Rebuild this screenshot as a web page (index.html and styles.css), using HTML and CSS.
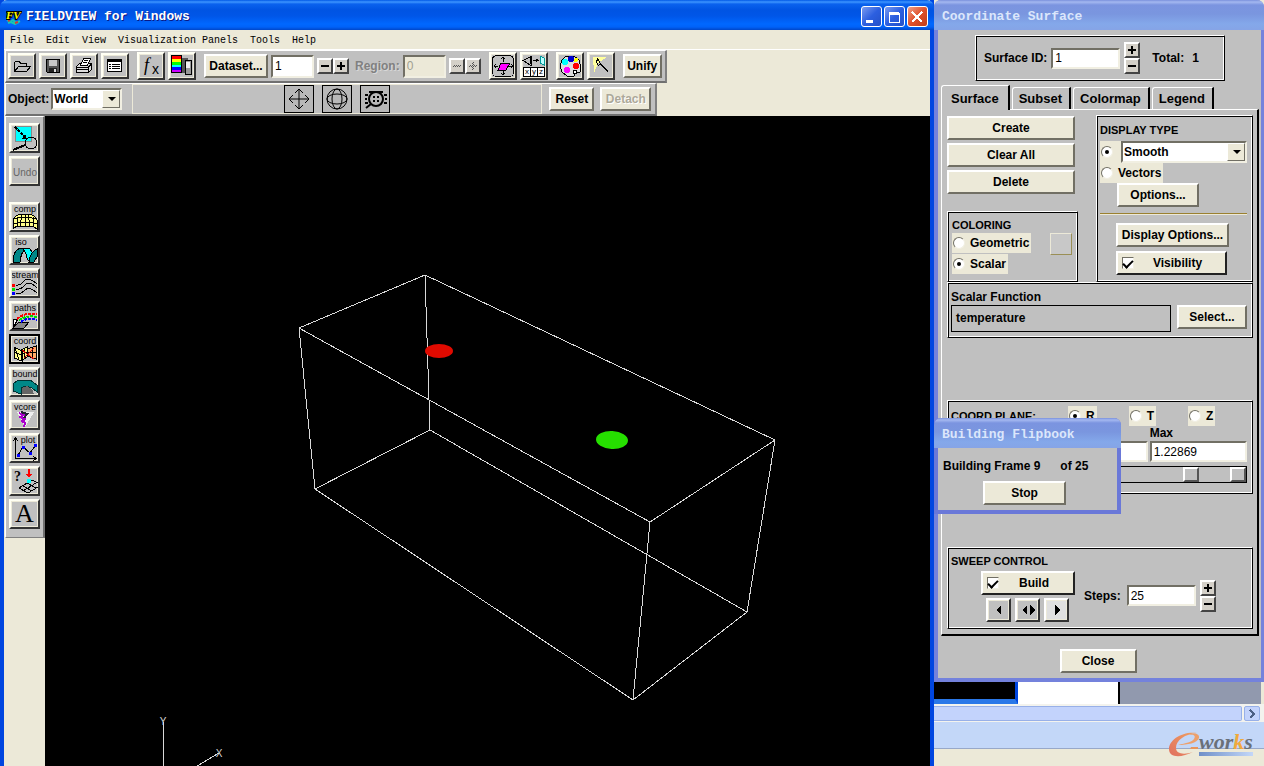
FILE: index.html
```
<!DOCTYPE html>
<html lang="en">
<head>
    <meta charset="UTF-8">
    <meta name="viewport" content="width=device-width, initial-scale=1.0">
    <title>FIELDVIEW for Windows</title>
    <link rel="stylesheet" href="styles.css">
</head>
<body>

<div class="desktop">

    <!-- Main window -->
    <main class="window">
        <header class="titlebar">
            <svg class="app-icon" width="16" height="16" viewBox="0 0 16 16">
                <path d="M1 11l3 2 3-2 3 3 4-2M2 14l3-1 4 2 4-2" stroke="#19c8b0" stroke-width="2" fill="none"/>
                <path d="M2 12l2-1M9 14l3-1" stroke="#d03a3a" stroke-width="2"/>
                <text x="0" y="10" class="app-icon-text">FV</text>
            </svg>
            <h1>FIELDVIEW for Windows</h1>
            <div class="win-buttons">
                <button aria-label="Minimize"><svg width="18" height="18"><path d="M4 12h7v3H4z" fill="#fff"/></svg></button>
                <button aria-label="Maximize"><svg width="18" height="18"><path d="M4 5h10v9H4z" fill="none" stroke="#fff"/><path d="M4 4h10v3H4z" fill="#fff"/></svg></button>
                <button class="win-close" aria-label="Close"><svg width="18" height="18"><path d="M4 4l10 10M14 4L4 14" stroke="#fff" stroke-width="2"/></svg></button>
            </div>
        </header>

        <nav class="menubar">
            <a href="#">File</a>
            <a href="#">Edit</a>
            <a href="#">View</a>
            <a href="#">Visualization Panels</a>
            <a href="#">Tools</a>
            <a href="#">Help</a>
        </nav>

        <div class="toolbar toolbar-main">
            <div class="tool-group">
                <button class="icon-btn" aria-label="Open"><svg width="20" height="18"><path d="M2.500 14.500v-9l1-1h4l1 2h6v3M2.500 14.500l4-5h12l-4 5z" fill="#c0c0c0" stroke="#000"/></svg></button>
                <button class="icon-btn" aria-label="Save"><svg width="20" height="18"><path d="M3.500 2.500h13v13h-12l-1-1z" fill="#555" stroke="#000"/><path d="M6 3h8v6H6z" fill="#c8c8c8"/><path d="M6 11h8v4H6z" fill="#222"/><path d="M11 12h2v3h-2z" fill="#ddd"/></svg></button>
                <button class="icon-btn" aria-label="Print"><svg width="20" height="18"><path d="M2.500 9.500l3-3h12v6l-3 3h-12z" fill="#ddd" stroke="#000"/><path d="M6.500 8.500l3-7h7l-3 7z" fill="#fff" stroke="#000"/><path d="M3 10.500h11l3-3M3 12.500h11M14.500 10v5M10 3.500h4M9 5.500h4" stroke="#000" fill="none"/></svg></button>
                <button class="icon-btn" aria-label="List"><svg width="20" height="18"><path d="M2.500 2.500h14v12h-14z" fill="#fff" stroke="#000"/><path d="M3 4h13" stroke="#000" stroke-width="2"/><path d="M4 7.500h2M7 7.500h8M4 9.500h2M7 9.500h8M4 11.500h2M7 11.500h8" stroke="#000"/></svg></button>
            </div>
            <div class="tool-group">
                <button class="icon-btn big" aria-label="Function"><svg width="24" height="24"><text x="5" y="17" class="fx-f">f</text><text x="13" y="20" class="fx-x">x</text></svg></button>
                <button class="icon-btn big" aria-label="Colormap"><svg width="24" height="24"><path d="M12 4h6v15h-6z" fill="#555"/><path d="M15.500 6.500h6v14h-6z" fill="#999" stroke="#000"/><path d="M16 8h4v6h-4z" fill="#eee"/><path d="M2 2h9v3H2z" fill="red"/><path d="M2 5h9v3H2z" fill="#ff0"/><path d="M2 8h9v3H2z" fill="#0f0"/><path d="M2 11h9v2H2z" fill="#0ff"/><path d="M2 13h9v3H2z" fill="#00f"/><path d="M2 16h9v2H2z" fill="#c0f"/><path d="M1.500 1.500h10v17h-10z" fill="none" stroke="#000"/></svg></button>
            </div>
            <button class="btn dataset">Dataset...</button>
            <input class="field small" type="text" value="1" aria-label="Dataset number">
            <div class="pair">
                <button class="step" aria-label="Previous dataset"><svg width="10" height="10"><path d="M1 5h8" stroke="#000" stroke-width="2"/></svg></button>
                <button class="step" aria-label="Next dataset"><svg width="10" height="10"><path d="M1 5h8M5 1v8" stroke="#000" stroke-width="2"/></svg></button>
            </div>
            <label class="dim" for="region">Region:</label>
            <input class="field small off" type="text" id="region" value="0" disabled>
            <div class="pair">
                <button class="step" aria-label="Previous region" disabled><svg width="10" height="10"><path d="M1 5.500h8" stroke="#555" stroke-dasharray="1 1"/><path d="M2 4.500h8" stroke="#555" stroke-dasharray="1 1"/></svg></button>
                <button class="step" aria-label="Next region" disabled><svg width="10" height="10"><path d="M1 5.500h8M5.500 1v8" stroke="#555" stroke-dasharray="1 1"/><path d="M2 4.500h8M4.500 2v8" stroke="#555" stroke-dasharray="1 1"/></svg></button>
            </div>
            <div class="tool-group">
                <button class="icon-btn big" aria-label="Transform"><svg width="24" height="24"><rect x="1.500" y="1.500" width="21" height="21" rx="4" fill="none" stroke="#000"/><path d="M10 9h9l-4 7H7z" fill="#f0f" stroke="#000"/><path d="M12 3v5M12 17v4M3 12h4M18 12h4M10 5l2-2 2 2M10 19l2 2 2-2M5 10l-2 2 2 2M20 10l2 2-2 2" stroke="#000" fill="none"/></svg></button>
                <button class="icon-btn big" aria-label="View axes"><svg width="24" height="24"><path d="M1 6.500l8-4v9zM8 3v7M11 6.500h4M14 5l2 1.500L14 8" stroke="#000" fill="none"/><path d="M18 2l4 2v7l-4-2z" fill="#bff" stroke="#099"/><path d="M1.500 13.500h21v9h-21zM8.500 13v9M15.500 13v9" fill="#fff" stroke="#000"/><text x="3" y="20" class="xyz">x</text><text x="10" y="20" class="xyz">y</text><text x="17" y="20" class="xyz">z</text></svg></button>
            </div>
            <div class="tool-group">
                <button class="icon-btn big" aria-label="Colors"><svg width="24" height="24"><path d="M8 2h8l5 4 2 7-1 5h-4l-2 4H9l-5-4-2-6 2-6z" fill="#ddd" stroke="#000"/><circle cx="7" cy="8" r="3" fill="#0ff"/><circle cx="13" cy="5" r="3" fill="#00c"/><circle cx="18" cy="6" r="2" fill="#ff0"/><circle cx="18" cy="12" r="3" fill="red"/><circle cx="9" cy="16" r="3" fill="#f0f"/><circle cx="17" cy="18" r="2" fill="#fff" stroke="#000"/></svg></button>
                <button class="icon-btn big" aria-label="Light"><svg width="24" height="24"><path d="M4 3h14L9 9 5 19z" fill="#ffff9c"/><path d="M8.500 4.500l3 5-2 2-2-3zM11 10l8 8" stroke="#000" fill="none"/><path d="M12 10l7 7" stroke="#000"/></svg></button>
            </div>
            <button class="btn unify">Unify</button>
        </div>

        <div class="toolbar toolbar-object">
            <label for="object">Object:</label>
            <span class="select world"><select id="object"><option>World</option></select></span>
            <div class="mode-strip">
                <button class="mode" aria-label="Translate"><svg width="26" height="26" viewBox="0 0 26 26"><path d="M13 3v20M3 13h20M9 7l4-4 4 4M9 19l4 4 4-4M7 9l-4 4 4 4M19 9l4 4-4 4"/></svg></button>
                <button class="mode" aria-label="Rotate"><svg width="26" height="26" viewBox="0 0 26 26"><circle cx="13" cy="13" r="10"/><ellipse cx="13" cy="13" rx="5" ry="10"/><ellipse cx="13" cy="13" rx="10" ry="5"/></svg></button>
                <button class="mode" aria-label="Zoom"><svg width="26" height="26" viewBox="0 0 26 26"><circle cx="14" cy="13" r="7" stroke-width="2"/><path d="M9 18l-5 4M11 11h2M15 11h2M11 15h2M15 15h2M3 9h3M3 13h2M3 17h3M22 9h3M23 13h2M22 17h3M7 6h14" stroke-width="2"/></svg></button>
            </div>
            <button class="btn reset">Reset</button>
            <button class="btn detach" disabled>Detach</button>
        </div>

        <div class="workspace">
            <aside class="side-tools">
                <button class="tool" aria-label="Zoom region"><svg width="26" height="26"><path d="M3.500 1.500h16v15h-16z" fill="#0ff" stroke="#888"/><circle cx="19" cy="18" r="6" fill="none" stroke="#000"/><path d="M13 20L1 25" stroke="#000" stroke-width="2"/><path d="M3 2l11 11" stroke="#000" stroke-width="2" stroke-dasharray="3 1"/><path d="M14 14V9l-5 5z"/></svg></button>
                <button class="tool undo" disabled><svg width="26" height="26"><text x="13" y="18" class="undo-text">Undo</text></svg></button>
                <button class="tool gap" aria-label="comp"><svg width="26" height="26"><text x="13" y="8" class="tool-text">comp</text><path d="M1 25v-9q2-5 9-6h6q8 1 9 6v9l-4-3H5z" fill="#ff8" stroke="#000"/><path d="M10 10L8 22M16 10l2 12M13 10v12M5 13v9M21 13v9M2 15q11-4 22 0M1 20q12-4 24 0" stroke="#000" fill="none"/></svg></button>
                <button class="tool" aria-label="iso"><svg width="26" height="26"><text x="9" y="8" class="tool-text">iso</text><path d="M1 25q0-12 8-14h6q-6 3-7 14z" fill="#088" stroke="#000"/><path d="M10 11h6q5 2 6 11l-4 3q-3-2-4-8-1-4-4-6z" fill="#0ff" stroke="#000"/><path d="M17 25q1-10 8-13v8l-3 5z" fill="#088" stroke="#000"/></svg></button>
                <button class="tool" aria-label="stream"><svg width="26" height="26"><text x="13" y="8" class="tool-text">stream</text><path d="M0 14h3v3H0z" fill="red"/><path d="M0 18h3v3H0z" fill="#0d0"/><path d="M0 22h3v3H0z" fill="#00f"/><path d="M4 15q4 1 8-4t13 3M4 19q5 1 9-4t12 3M4 24q5 0 9-4t12 3" stroke="#000" fill="none"/></svg></button>
                <button class="tool" aria-label="paths"><svg width="26" height="26"><text x="13" y="8" class="tool-text">paths</text><path d="M1 25l6-6h10l-5 6z" fill="#888" stroke="#000"/><path d="M1.500 16.500h4l-4 8z" fill="#fff" stroke="#000"/><path d="M5 16q8-7 20-5" stroke="red" stroke-width="2" stroke-dasharray="3 1" fill="none"/><path d="M7 17q8-5 18-3" stroke="#0d0" stroke-width="2" stroke-dasharray="3 1" fill="none"/><path d="M9 19q6-5 16-2" stroke="#00f" stroke-width="2" stroke-dasharray="3 1" fill="none"/></svg></button>
                <button class="tool active" aria-label="coord"><svg width="26" height="26"><text x="13" y="8" class="tool-text">coord</text><path d="M2 11l8 4v10l-8-3zM9 14l6-3v10l-6 4z" fill="#ff8" stroke="#000"/><path d="M15 13l9-3v13l-9-3z" fill="#fa6" stroke="#000"/><path d="M2 16l7 3 6-3 9 1M3 12l4 12M20 12v10M12 13v10" stroke="#000" fill="none"/><path d="M10 14l12 9M22 12L12 22" stroke="#c00" fill="none"/></svg></button>
                <button class="tool" aria-label="bound"><svg width="26" height="26"><text x="13" y="8" class="tool-text">bound</text><path d="M1 15l5-4h12l7 5v7l-5-4-6-2-5 2v6l-8-3z" fill="#088" stroke="#033"/><path d="M10 19l5-2 5 3 2 5H10z" fill="#666"/></svg></button>
                <button class="tool" aria-label="vcore"><svg width="26" height="26"><text x="13" y="8" class="tool-text">vcore</text><path d="M5 10h17l-4 7-5 8-3-6z" fill="#eee"/><path d="M7 11l5 2-4 2 5 2-3 2 3 2-1 4" stroke="#a0c" stroke-width="2" fill="none"/><path d="M9 10l6 2-3 4" stroke="#223" stroke-width="2" fill="none"/></svg></button>
                <button class="tool" aria-label="plot"><svg width="26" height="26"><text x="16" y="8" class="tool-text">plot</text><path d="M3.500 24V3M1 6l2.500-3L6 6M3 23.500h21M21 21l3 2.500-3 2.500" stroke="#000" fill="none"/><path d="M6 20l5-8 7 6 6-8" stroke="#000" fill="none"/><path d="M5 19h3v3H5zM10 11h3v3h-3zM17 17h3v3h-3zM22 9h3v3h-3z" fill="#00f"/></svg></button>
                <button class="tool" aria-label="Probe"><svg width="26" height="26"><text x="2" y="13" class="probe-text">?</text><path d="M7 20l13-8 6 3M7 20l9 5 10-6M11 18l9 5M15 15l9 5M11 23l13-8" stroke="#000" fill="none"/><path d="M16 1h2v6h-2zM14 6h6l-3 4z" fill="red"/><path d="M15 11h4v4h-4z" fill="#0ff"/></svg></button>
                <button class="tool letter">A</button>
            </aside>

            <div class="viewport">
                <svg viewBox="0 0 885 650" preserveAspectRatio="xMinYMin meet">
                    <g class="wire">
                        <path d="M380 159L254 212L605 406L730 324Z"/>
                        <path d="M385 314L270 373L588 584L702 496Z"/>
                        <path d="M380 159L385 314M254 212L270 373M605 406L588 584M730 324L702 496"/>
                        <path d="M118 606V650M174 637L152 650"/>
                    </g>
                    <ellipse cx="394" cy="235" rx="14" ry="7" fill="#e00a00"/>
                    <ellipse cx="567" cy="324" rx="16" ry="9" fill="#26e000" transform="rotate(3 567 324)"/>
                    <text x="118" y="609" class="axis">Y</text>
                    <text x="174" y="641" class="axis">X</text>
                </svg>
            </div>
        </div>
    </main>

    <div class="right-side">

        <!-- Coordinate Surface panel -->
        <section class="dialog">
            <h2 class="dialog-title">Coordinate Surface</h2>
            <div class="dialog-body">
                <div class="box surface-id">
                    <label for="surfaceId">Surface ID:</label>
                    <input class="field number" type="text" id="surfaceId" value="1">
                    <div class="stepper">
                        <button class="step" aria-label="Increase ID"><svg width="10" height="10"><path d="M1 5h8M5 1v8" stroke="#000" stroke-width="2"/></svg></button>
                        <button class="step" aria-label="Decrease ID"><svg width="10" height="10"><path d="M1 5h8" stroke="#000" stroke-width="2"/></svg></button>
                    </div>
                    <span class="total">Total:</span>
                    <span>1</span>
                </div>

                <div class="tabs">
                    <button class="tab current">Surface</button>
                    <button class="tab">Subset</button>
                    <button class="tab">Colormap</button>
                    <button class="tab">Legend</button>
                </div>

                <div class="page">
                    <div class="top-row">
                        <div class="left-col">
                            <button class="btn">Create</button>
                            <button class="btn">Clear All</button>
                            <button class="btn">Delete</button>
                            <div class="box coloring">
                                <div>
                                    <h3>COLORING</h3>
                                    <label class="option"><input type="radio" name="coloring">Geometric</label>
                                    <label class="option"><input type="radio" name="coloring" checked>Scalar</label>
                                </div>
                                <button class="swatch" aria-label="Color"></button>
                            </div>
                        </div>
                        <div class="box display-type">
                            <h3>DISPLAY TYPE</h3>
                            <div class="smooth-row">
                                <label class="option bare"><input type="radio" name="display" aria-label="Smooth" checked></label>
                                <span class="select"><select aria-label="Display type"><option>Smooth</option></select></span>
                            </div>
                            <label class="option"><input type="radio" name="display">Vectors</label>
                            <button class="btn options">Options...</button>
                            <hr>
                            <button class="btn display-options">Display Options...</button>
                            <label class="toggle"><input type="checkbox" checked><span>Visibility</span></label>
                        </div>
                    </div>

                    <div class="box scalar">
                        <h3 class="mixed">Scalar Function</h3>
                        <div class="scalar-row">
                            <output>temperature</output>
                            <button class="btn">Select...</button>
                        </div>
                    </div>

                    <div class="box coord">
                        <div class="plane-row">
                            <h3>COORD PLANE:</h3>
                            <label class="option"><input type="radio" name="plane" checked>R</label>
                            <label class="option"><input type="radio" name="plane">T</label>
                            <label class="option"><input type="radio" name="plane">Z</label>
                        </div>
                        <div class="range-row">
                            <input class="field" type="text" aria-label="Min">
                            <input class="field" type="text" aria-label="Current">
                            <label>Max<input class="field" type="text" value="1.22869"></label>
                        </div>
                        <div class="track">
                            <input type="range" aria-label="Current" value="83">
                            <input type="range" aria-label="Maximum" value="100">
                        </div>
                    </div>

                    <div class="box sweep">
                        <h3>SWEEP CONTROL</h3>
                        <div class="sweep-row">
                            <div class="sweep-left">
                                <label class="toggle"><input type="checkbox" checked><span>Build</span></label>
                                <div class="play">
                                    <button aria-label="Back"><svg width="18" height="18"><path d="M11 4v10L6 9z"/></svg></button>
                                    <button aria-label="Bounce"><svg width="18" height="18"><path d="M8 4v10L3 9zM11 4v10l5-5z"/></svg></button>
                                    <button class="pressed" aria-label="Forward"><svg width="18" height="18"><path d="M7 4v10l5-5z"/></svg></button>
                                </div>
                            </div>
                            <label for="steps">Steps:</label>
                            <input class="field number" type="text" id="steps" value="25">
                            <div class="stepper">
                                <button class="step" aria-label="More steps"><svg width="10" height="10"><path d="M1 5h8M5 1v8" stroke="#000" stroke-width="2"/></svg></button>
                                <button class="step" aria-label="Fewer steps"><svg width="10" height="10"><path d="M1 5h8" stroke="#000" stroke-width="2"/></svg></button>
                            </div>
                        </div>
                    </div>
                </div>

                <button class="btn close-btn">Close</button>
            </div>
        </section>

        <!-- Progress popup -->
        <section class="dialog flipbook">
            <h2 class="dialog-title">Building Flipbook</h2>
            <div class="dialog-body">
                <p><span>Building Frame 9</span><span>of 25</span></p>
                <button class="btn">Stop</button>
            </div>
        </section>

        <!-- Window behind the panel -->
        <div class="behind">
            <div class="behind-top">
                <div class="behind-black"></div>
                <div class="behind-white"></div>
            </div>
            <div class="scrollbar">
                <div class="scroll-thumb"></div>
                <button aria-label="Scroll right"><svg width="14" height="14"><path d="M5 3l4 4-4 4" stroke="#4d6185" stroke-width="2" fill="none"/></svg></button>
            </div>
            <div class="status"></div>
            <svg class="logo" width="92" height="30" viewBox="0 0 92 30" role="img" aria-label="e-works">
                <defs>
                    <linearGradient id="flame" x1="0" y1="1" x2="1" y2="0">
                        <stop offset="0" stop-color="#e07060"/>
                        <stop offset="1" stop-color="#f0a060"/>
                    </linearGradient>
                    <linearGradient id="bar">
                        <stop offset="0" stop-color="#6f8fc8"/>
                        <stop offset="1" stop-color="#c3d7f8"/>
                    </linearGradient>
                </defs>
                <path d="M29 3C14 1 1 10 1 19c0 9 12 9 24 3-9 3-17 2-17-4C8 10 17 4 29 3z" fill="url(#flame)"/>
                <path d="M10 15c10 0 19-2 21-7 1-4-5-6-10-3 5-1 7 1 5 4-2 3-8 4-16 6z" fill="#eda06c"/>
                <path d="M23 17h7v2h-8z" fill="#e8955c"/>
                <path d="M31 22h54v4H31z" fill="url(#bar)"/>
                <text x="31" y="19" class="logo-text">wor<tspan fill="#f0a93c">k</tspan>s</text>
            </svg>
        </div>
    </div>
</div>

</body>
</html>
```
FILE: styles.css
```
* {
    box-sizing: border-box;
}

body {
    margin: 0;
    font-family: "Liberation Sans", Arial, sans-serif;
    font-size: 12px;
    font-weight: bold;
    color: #000;
    background: #ece9d8;
}

h1, h2, h3, p {
    margin: 0;
}

button, input, select {
    font: inherit;
    color: inherit;
    margin: 0;
    padding: 0;
}

svg {
    display: block;
    flex: none;
}

button svg {
    shape-rendering: crispEdges;
}

.desktop {
    display: flex;
    height: 100vh;
    overflow: hidden;
}

/* Main window */
.window {
    flex: 1;
    min-width: 0;
    display: flex;
    flex-direction: column;
    border: solid #0046e0;
    border-width: 0 4px;
    background: #ece9d8;
}

.titlebar {
    display: flex;
    align-items: center;
    flex: none;
    height: 30px;
    margin: 0 -4px;
    padding: 3px 6px 0;
    border-radius: 7px 7px 0 0;
    background: linear-gradient(#0058e6 0, #3d95ff 2px, #0a62ee 4px, #0054e3 10px, #0056e8 16px, #0068ff 24px, #0062f8 27px, #0046c8 30px);
}

.titlebar h1 {
    flex: 1;
    margin-left: 4px;
    font: bold 13px "Liberation Mono", monospace;
    color: #fff;
    text-shadow: 1px 1px 0 #0a1883;
}

.app-icon-text {
    font: italic bold 11px "Liberation Serif", serif;
    fill: #ff0;
    stroke: #000;
    stroke-width: 2px;
    paint-order: stroke;
}

.win-buttons {
    display: flex;
    gap: 2px;
}

.win-buttons button {
    width: 21px;
    height: 21px;
    border: 1px solid #fff;
    border-radius: 3px;
    background: linear-gradient(135deg, #7a9bf0, #2c5fe0 50%, #2450c8);
}

.win-buttons .win-close {
    background: linear-gradient(135deg, #f0a088, #e0512c 50%, #c03c18);
}

.menubar {
    display: flex;
    gap: 12px;
    align-items: center;
    flex: none;
    height: 20px;
    padding: 1px 0 0 6px;
    border-bottom: 1px solid #fff;
    font: 10px "Liberation Mono", monospace;
}

.menubar a {
    color: #000;
    text-decoration: none;
}

.toolbar {
    display: flex;
    align-items: center;
    align-self: flex-start;
    flex: none;
    margin-left: 1px;
    background: #c0c0c0;
    border: 1px solid #fff;
    border-right: 2px solid #808080;
    border-bottom: 2px solid #707070;
}

.toolbar-main {
    height: 33px;
    gap: 3px;
    padding: 0 3px 0 2px;
}

.tool-group {
    display: flex;
    align-items: center;
    gap: 3px;
    margin-right: 5px;
}

.icon-btn, .tool {
    display: flex;
    align-items: center;
    justify-content: center;
    border: 2px solid;
    border-color: #fffff4 #333 #333 #fffff4;
    background: #c0c0c0;
    box-shadow: inset 0 0 0 1px #ece9d8;
}

.icon-btn {
    width: 28px;
    height: 26px;
}

.icon-btn.big {
    height: 28px;
}

.fx-f {
    font: italic 18px "Liberation Serif", serif;
}

.fx-x {
    font: 14px "Liberation Sans", sans-serif;
}

.xyz {
    font: 8px "Liberation Sans", sans-serif;
}

.btn {
    height: 24px;
    background: #ece9d8;
    border: 2px solid;
    border-color: #fff #716f64 #716f64 #fff;
    white-space: nowrap;
}

.dataset {
    width: 64px;
}

.unify {
    width: 39px;
}

.field {
    height: 21px;
    padding: 0 2px;
    font-weight: normal;
    background: #fff;
    border: 2px solid;
    border-color: #716f64 #f1efe2 #f1efe2 #716f64;
    border-radius: 0;
    min-width: 0;
}

.field.small {
    width: 43px;
    height: 23px;
}

.field.off {
    background: #ece9d8;
    color: #a0a090;
}

.pair {
    display: flex;
    margin-right: 3px;
}

.pair + .tool-group {
    margin-left: 2px;
    margin-right: 5px;
}

.step {
    display: flex;
    align-items: center;
    justify-content: center;
    width: 16px;
    height: 16px;
    background: #d4d0c8;
    border: 2px solid;
    border-color: #fff #444 #444 #fff;
}

.dim {
    color: #808080;
    text-shadow: 1px 1px 0 #d8d8d8;
}

.toolbar-object {
    height: 33px;
    padding: 0 4px 0 2px;
}

.select {
    position: relative;
    display: flex;
    flex: 1;
    height: 22px;
    background: #fff;
    border: 2px solid;
    border-color: #716f64 #f1efe2 #f1efe2 #716f64;
}

.select select {
    flex: 1;
    min-width: 0;
    padding-left: 1px;
    appearance: none;
    border: none;
    border-radius: 0;
    background: none;
}

/* drop-down button and its arrow */
.select::before {
    content: "";
    position: absolute;
    right: 0;
    top: 0;
    bottom: 0;
    width: 16px;
    background: #ece9d8;
    border: 1px solid;
    border-color: #fff #716f64 #716f64 #fff;
    pointer-events: none;
}

.select::after {
    content: "";
    position: absolute;
    right: 4px;
    top: 7px;
    border: 4px solid transparent;
    border-top-color: #000;
    border-bottom: none;
    pointer-events: none;
}

.world {
    flex: none;
    width: 71px;
    margin-left: 2px;
}

.mode-strip {
    display: flex;
    justify-content: center;
    align-items: center;
    gap: 8px;
    width: 410px;
    height: 30px;
    margin: 0 7px 0 10px;
    border: 1px solid #ece9d8;
}

.mode {
    display: flex;
    align-items: center;
    justify-content: center;
    width: 30px;
    height: 28px;
    background: #b8b8b8;
    border: 1px solid #000;
}

.mode svg {
    shape-rendering: auto;
    fill: none;
    stroke: #000;
}

.reset {
    width: 45px;
}

.detach {
    width: 51px;
    margin-left: 6px;
    color: #aca899;
    text-shadow: 1px 1px 0 #fff;
}

.workspace {
    flex: 1;
    display: flex;
    min-height: 0;
}

.side-tools {
    display: flex;
    flex-direction: column;
    gap: 3px;
    align-self: flex-start;
    width: 40px;
    flex: none;
    margin-left: 1px;
    padding: 6px 4px 8px 3px;
    background: #c0c0c0;
    border: 1px solid #fff;
    border-right: 2px solid #707070;
    border-bottom: 1px solid #808080;
}

.tool {
    flex: none;
    width: 31px;
    height: 30px;
    overflow: hidden;
}

.tool.gap {
    margin-top: 13px;
}

.tool.active {
    border-color: #000;
}

.tool.letter {
    font: 26px "Liberation Serif", serif;
}

.tool-text {
    font: 9px "Liberation Sans", sans-serif;
    text-anchor: middle;
}

.undo-text {
    font: 10px "Liberation Sans", sans-serif;
    fill: #666;
    text-anchor: middle;
}

.probe-text {
    font: bold 14px "Liberation Serif", serif;
}

.viewport {
    flex: 1;
    min-width: 0;
    background: #000;
    overflow: hidden;
}

.viewport svg {
    width: 100%;
}

.wire {
    fill: none;
    stroke: #d8d8d8;
    stroke-width: 1;
    shape-rendering: crispEdges;
}

.axis {
    font: 10px "Liberation Sans", sans-serif;
    fill: #d8d8d8;
    text-anchor: middle;
}

/* Dialogs */
.right-side {
    position: relative;
    display: flex;
    flex-direction: column;
    flex: none;
    width: 330px;
}

.dialog {
    flex: none;
    background: #c0c0c0;
    border: 4px solid #7482dc;
    border-top: none;
    border-right-width: 3px;
    border-radius: 7px 7px 0 0;
}

.dialog-title {
    height: 30px;
    margin: 0 -3px 0 -4px;
    padding: 3px 0 0 8px;
    font: bold 13px/27px "Liberation Mono", monospace;
    color: #dbe6fb;
    border-radius: 7px 7px 0 0;
    background: linear-gradient(#7a90dc 0, #a4b8f0 2px, #7b94e0 5px, #7a96df 14px, #84a8ea 24px, #86a4e6 30px);
}

.dialog-body {
    display: flex;
    flex-direction: column;
    padding: 5px 2px 5px 3px;
}

/* etched frame */
.box {
    border: 1px solid;
    border-color: #fff #000 #000 #fff;
    box-shadow: inset 1px 1px 0 #000, inset -1px -1px 0 #fff;
}

.box h3 {
    font-size: 11px;
    line-height: 16px;
}

.box h3.mixed {
    font-size: 12px;
}

.surface-id {
    display: flex;
    align-items: center;
    align-self: center;
    width: 250px;
    height: 46px;
    padding-left: 8px;
}

.number {
    width: 69px;
    margin: 0 4px 0 4px;
}

.total {
    margin: 0 8px 0 12px;
}

.tabs {
    display: flex;
    align-items: flex-end;
    gap: 2px;
    height: 24px;
    margin-top: 4px;
}

.tab {
    height: 22px;
    padding: 0 7px 0 6px;
    font-size: 13px;
    background: #c0c0c0;
    border: 1px solid #fff;
    border-right: 2px solid #000;
    border-bottom: none;
    border-radius: 3px 0 0 0;
}

.tab.current {
    height: 25px;
    margin-bottom: -1px;
    padding: 0 9px;
    position: relative;
}

.page {
    padding: 5px 4px 5px 5px;
    border: 1px solid #fff;
    border-right: 2px solid #000;
    border-bottom: 2px solid #000;
}

.top-row {
    display: flex;
    justify-content: space-between;
}

.left-col {
    display: flex;
    flex-direction: column;
    gap: 3px;
    width: 131px;
    padding-top: 1px;
}

.left-col > .btn {
    width: 128px;
}

.coloring {
    display: flex;
    justify-content: space-between;
    margin-top: auto;
    height: 71px;
    padding: 5px 5px 0 4px;
}

.option {
    display: flex;
    align-items: center;
    width: fit-content;
    height: 20px;
    padding-right: 2px;
    background: #ece9d8;
}

.coloring .option {
    margin-bottom: 1px;
}

.option input {
    appearance: none;
    display: grid;
    place-items: center;
    width: 12px;
    height: 12px;
    margin: 0 5px 0 1px;
    background: #fff;
    border: 1px solid;
    border-color: #716f64 #f1efe2 #f1efe2 #716f64;
    border-radius: 50%;
}

.option input:checked::before {
    content: "";
    width: 4px;
    height: 4px;
    border-radius: 50%;
    background: #000;
}

.swatch {
    width: 22px;
    height: 22px;
    margin-top: 16px;
    background: #c8c8c8;
    border: 1px solid;
    border-color: #ece9d8 #9a8f55 #9a8f55 #ece9d8;
}

.display-type {
    display: flex;
    flex-direction: column;
    width: 157px;
    height: 167px;
    padding: 6px 5px 0 3px;
}

.smooth-row {
    display: flex;
    margin-top: 3px;
}

.option.bare {
    width: 21px;
    height: 22px;
}

.options {
    width: 82px;
    margin-left: 17px;
}

.display-type hr {
    width: 100%;
    height: 2px;
    margin: 6px 0 8px;
    border: none;
    background: linear-gradient(#9a8030 50%, #ece9d8 50%);
}

.display-options {
    width: 113px;
    margin-left: 16px;
}

.toggle {
    display: flex;
    align-items: center;
    height: 24px;
    padding: 0 4px;
    background: #ece9d8;
    border: 2px solid;
    border-color: #fff #222 #222 #fff;
}

.toggle span {
    flex: 1;
    text-align: center;
}

.toggle input {
    appearance: none;
    display: flex;
    justify-content: center;
    width: 12px;
    height: 12px;
    background: #fff;
    border: 1px solid;
    border-color: #716f64 #f1efe2 #f1efe2 #716f64;
}

.toggle input:checked::before {
    content: "";
    width: 4px;
    height: 8px;
    border: solid #000;
    border-width: 0 2px 2px 0;
    transform: rotate(45deg);
}

.display-type .toggle {
    width: 111px;
    margin: 4px 0 0 16px;
}

.scalar {
    height: 56px;
    padding: 6px 5px 0 3px;
}

.scalar-row {
    display: flex;
    justify-content: space-between;
}

.scalar-row output {
    width: 220px;
    height: 27px;
    padding-left: 4px;
    line-height: 25px;
    border: 1px solid #000;
}

.scalar-row .btn {
    width: 70px;
}

.coord {
    height: 94px;
    margin-top: 62px;
    padding: 5px 5px 0 3px;
}

.plane-row {
    display: flex;
    align-items: center;
    gap: 32px;
}

.range-row {
    display: grid;
    grid-template-columns: repeat(3, 1fr);
    align-items: end;
    gap: 2px;
}

.range-row label {
    line-height: 15px;
}

.range-row .field {
    display: block;
    width: 100%;
}

.track {
    display: grid;
    height: 17px;
    margin-top: 4px;
    border: 1px solid #000;
}

.track input {
    grid-area: 1 / 1;
    width: 100%;
    height: 15px;
    appearance: none;
    background: none;
}

.track input::-webkit-slider-thumb {
    appearance: none;
    width: 16px;
    height: 15px;
    background: #c0c0c0;
    border: 2px solid;
    border-color: #fff #555 #555 #fff;
}

.sweep {
    height: 82px;
    margin-top: 53px;
    padding: 5px 5px 0 3px;
}

.sweep-row {
    display: flex;
    align-items: center;
    padding-left: 30px;
}

.sweep-left {
    width: 94px;
    margin: 2px 9px 0 0;
}

.sweep-row .number {
    margin-left: 6px;
}

.play {
    display: flex;
    gap: 4px;
    padding: 3px 5px 0;
}

.play button {
    display: flex;
    align-items: center;
    justify-content: center;
    width: 25px;
    height: 24px;
    background: #c0c0c0;
    border: 2px solid;
    border-color: #fff #333 #333 #fff;
    box-shadow: inset 0 0 0 1px #ece9d8;
}

.play .pressed {
    background: #e0e0e0;
}

.close-btn {
    align-self: center;
    width: 77px;
    margin: 13px 4px 0 0;
}

/* Progress popup lies over the panel */
.flipbook {
    position: absolute;
    left: 0;
    top: 418px;
    width: 187px;
    border-right-width: 4px;
    border-color: #6a78d8;
}

.flipbook .dialog-title {
    margin-right: -4px;
}

.flipbook .dialog-body {
    padding: 10px 5px 5px;
}

.flipbook p {
    display: flex;
    gap: 20px;
    line-height: 16px;
}

.flipbook .btn {
    width: 83px;
    margin: 7px 0 0 40px;
}

/* Window behind */
.behind {
    position: relative;
    flex: 1;
    background: #ece9d8;
}

.behind-top {
    display: flex;
    height: 22px;
    margin-right: 3px;
    background: #9199ae;
}

.behind-black {
    width: 84px;
    background: #000;
    border-right: 3px solid #0046e0;
    border-bottom: 5px solid #2a78e8;
}

.behind-white {
    width: 102px;
    background: #fff;
    border-right: 2px solid #000;
}

.scrollbar {
    display: flex;
    gap: 2px;
    height: 18px;
    padding: 2px 4px 1px 0;
    background: #f3f3ee;
}

.scroll-thumb {
    flex: 1;
    background: #c3d3fc;
    border: 1px solid #98b0e8;
    border-left: none;
    border-radius: 0 2px 2px 0;
}

.scrollbar button {
    width: 16px;
    background: #c3d3fc;
    border: 1px solid #98b0e8;
    border-radius: 2px;
}

.status {
    height: 27px;
    background: #c3d7f8;
    border-bottom: 1px solid #98a8c8;
}

/* watermark sits over the status bar */
.logo {
    position: absolute;
    right: 4px;
    top: 48px;
}

.logo-text {
    font: italic bold 22px "Liberation Serif", serif;
    fill: #6a7078;
}
```
